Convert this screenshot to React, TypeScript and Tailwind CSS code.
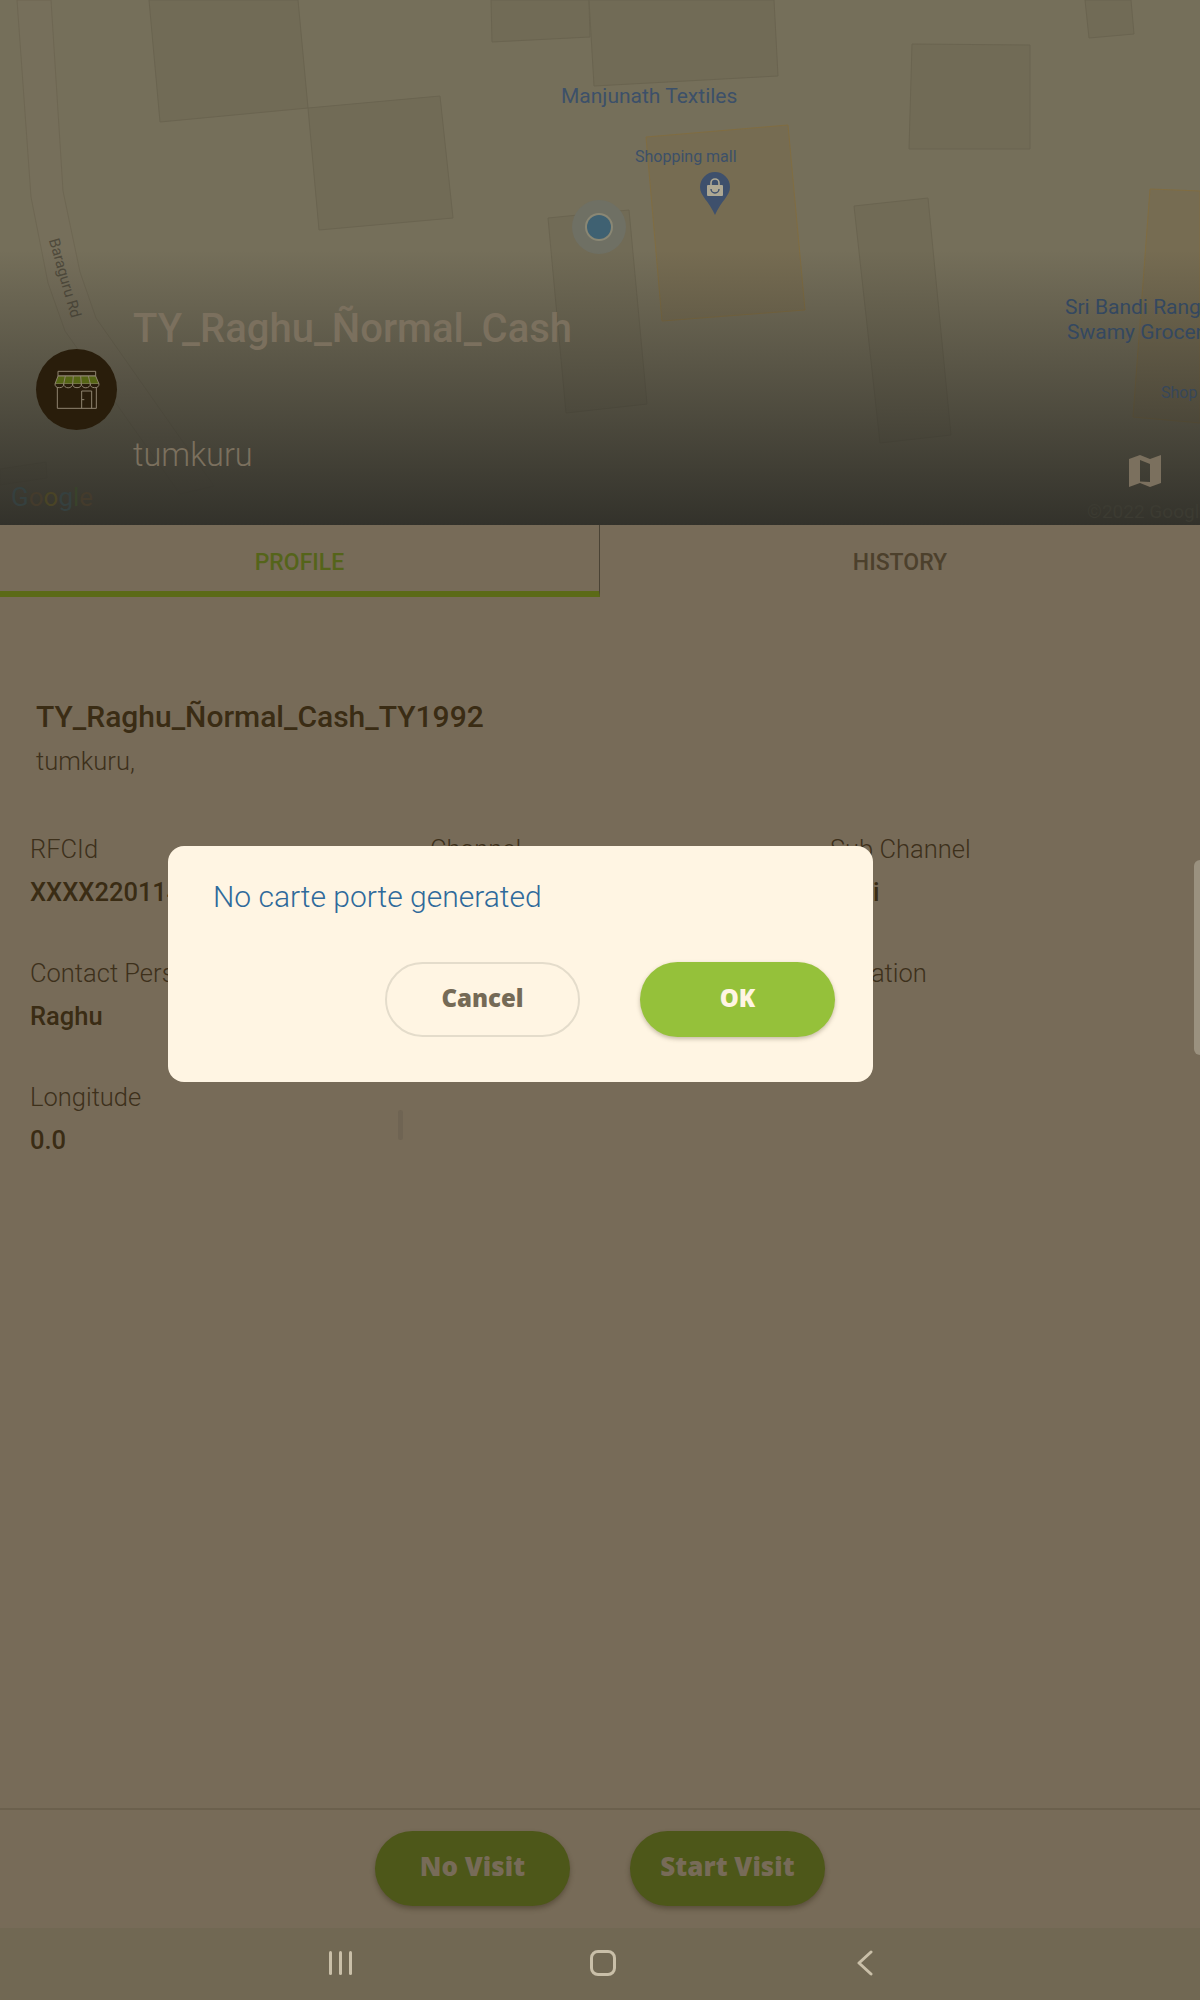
import React from "react";

const ROBOTO = "font-['Roboto','Liberation_Sans',sans-serif]";
const BTN = "font-['Noto_Sans','Liberation_Sans',sans-serif]";

function MapLayer() {
  const plain = "#716b56";
  const edge = "#6a6450";
  const blds = [
    "149,0 160,122 308,108 298,0",
    "308,108 440,96 453,218 319,230",
    "491,0 492,42 590,37 589,0",
    "589,0 594,86 778,76 774,0",
    "548,218 629,210 647,404 566,413",
    "912,44 1030,45 1030,149 909,149",
    "1085,0 1131,0 1134,34 1089,38",
    "854,206 928,198 951,435 880,443",
    "0,469 46,462 47,478 0,485",
  ];
  return (
    <svg width="1200" height="525" viewBox="0 0 1200 525" className="absolute inset-0">
      <rect width="1200" height="525" fill="#756f5a" />
      <polygon points="17,0 31,197 48,283 65,331 180,494 214,486 96,318 80,272 63,191 51,0" fill="#766f5b" stroke="#6e6753" strokeWidth="1" />
      {blds.map((p) => (
        <polygon key={p} points={p} fill={plain} stroke={edge} strokeWidth="1" />
      ))}
      <polygon points="646,137 788,125 805,310 662,321" fill="#766c52" stroke="#806d42" strokeWidth="1" />
      <polygon points="1150,189 1200,191 1200,423 1133,417" fill="#766c52" stroke="#806d42" strokeWidth="1" />
      <circle cx="599" cy="227" r="27" fill="#6f7064" />
      <circle cx="599" cy="227" r="14" fill="#8a8774" />
      <circle cx="599" cy="227" r="12" fill="#3f6172" />
      <path d="M715 172a15 15 0 0 1 15 15c0 9-9 14-15 28c-6-14-15-19-15-28a15 15 0 0 1 15-15z" fill="#3e506c" />
      <rect x="707" y="185" width="16" height="11" rx="1" fill="#aea893" />
      <path d="M711 185v-2a4 4 0 0 1 8 0v2" fill="none" stroke="#aea893" strokeWidth="1.6" />
      <path d="M711 189a4 4 0 0 0 8 0" fill="none" stroke="#3e506c" strokeWidth="1.4" />
    </svg>
  );
}

function StoreIcon() {
  return (
    <svg width="48" height="48" viewBox="157 136 144 144" fill="none" stroke="#8f8470" strokeWidth="3">
      <path d="M172 152H285V166H172Z" />
      <path d="M172 166H285L295 190H163Z" fill="#556514" />
      <path d="M163 190a13 11 0 0 0 26 0a13 11 0 0 0 27 0a13 11 0 0 0 26 0a13 11 0 0 0 27 0a13 11 0 0 0 26 0" fill="#291d0b" />
      <path d="M189 190L194 166M216 190L218 166M242 190L240 166M269 190L263 166" />
      <path d="M170 199V263H287V199" />
      <path d="M243 263V211H273V263" />
      <path d="M244 237H251" />
    </svg>
  );
}

function Header() {
  return (
    <div className="relative h-[525px] overflow-hidden bg-[#756f5a]">
      <MapLayer />
      <span className={`${ROBOTO} absolute left-[561px] top-[84px] text-[21px] leading-6 text-[#3c5069] whitespace-nowrap`}>Manjunath Textiles</span>
      <span className={`${ROBOTO} absolute left-[635px] top-[147px] text-[16px] leading-5 text-[#3c5069] whitespace-nowrap`}>Shopping mall</span>
      <span className={`${ROBOTO} absolute left-[24px] top-[268px] text-[15px] leading-5 text-[#4f4a3b] whitespace-nowrap rotate-[74deg]`}>Baraguru Rd</span>
      <div className="absolute inset-x-0 bottom-0 h-[275px] bg-gradient-to-b from-transparent to-[#33322b]" />
      <span className={`${ROBOTO} absolute left-[1065px] top-[295px] text-[21px] leading-[25px] text-[#344860] whitespace-nowrap`}>Sri Bandi Rang<br /><span className="ml-[2px]">Swamy Grocer</span></span>
      <span className={`${ROBOTO} absolute left-[1161px] top-[383px] text-[16px] leading-5 text-[#37475a] whitespace-nowrap`}>Shop</span>
      <span className={`${ROBOTO} absolute left-[11px] top-[481px] text-[26px] leading-8 text-[#3a3c35] whitespace-nowrap`}>
        <span className="text-[#35403f]">G</span><span className="text-[#443b2c]">o</span><span className="text-[#4a4426]">o</span><span className="text-[#35403f]">g</span><span className="text-[#39432b]">l</span><span className="text-[#443b2c]">e</span>
      </span>
      <span className={`${ROBOTO} absolute left-[1087px] top-[502px] text-[19px] leading-5 text-[#3c3b32] whitespace-nowrap`}>©2022 Google</span>
      <span className={`${ROBOTO} absolute left-[133px] top-[306px] text-[40px] leading-[46px] font-medium text-[#7b705e] whitespace-nowrap`}>TY_Raghu_Ñormal_Cash</span>
      <span className={`${ROBOTO} absolute left-[133px] top-[436px] text-[32.500px] leading-[38px] font-light text-[#7b705e] whitespace-nowrap`}>tumkuru</span>
      <div className="absolute left-[36px] top-[349px] flex h-[81px] w-[81px] items-center justify-center rounded-full bg-[#291d0b]">
        <StoreIcon />
      </div>
      <svg className="absolute left-[1129px] top-[455px]" width="32" height="32" viewBox="0 0 32 32">
        <path fillRule="evenodd" fill="#7b705e" d="M0 4L11 0L21 4L32 0V28L21 32L11 28L0 32ZM11 5V26.500L21 27V9Z" />
      </svg>
    </div>
  );
}

function Tabs() {
  return (
    <div className={`${ROBOTO} flex h-[72px] text-[23px] font-medium`}>
      <div className="flex h-full w-[600px] items-center justify-center border-r border-r-[#4a4335] border-b-[6px] border-b-[#5b6a17] pt-[10px] text-[#55641a]">PROFILE</div>
      <div className="flex h-full flex-1 items-center justify-center pt-[4px] text-[#4c402c]">HISTORY</div>
    </div>
  );
}

function Field({ label, value }: { label: string; value: string }) {
  return (
    <div className="h-[124px]">
      <div className="text-[25.500px] font-light leading-[34px] text-[#3d301b] whitespace-nowrap">{label}</div>
      <div className="mt-[9px] text-[25.500px] font-medium leading-[34px] text-[#3a2c14] whitespace-nowrap">{value}</div>
    </div>
  );
}

function Profile() {
  return (
    <div className={`${ROBOTO} relative flex-1 pt-[100px]`}>
      <div className="pl-[36px]">
        <div className="text-[30px] font-medium leading-10 text-[#3a2c14] whitespace-nowrap">TY_Raghu_Ñormal_Cash_TY1992</div>
        <div className="mt-[7px] text-[25.500px] font-light leading-[34px] text-[#3d301b]">tumkuru,</div>
      </div>
      <div className="mt-[54px] grid grid-cols-[400px_400px_1fr] pl-[30px]">
        <Field label="RFCId" value="XXXX220114" />
        <Field label="Channel" value="Retail" />
        <Field label="Sub Channel" value="Mini" />
        <Field label="Contact Person" value="Raghu" />
        <Field label="Phone" value="99999" />
        <Field label="Location" value="" />
        <Field label="Longitude" value="0.0" />
      </div>
      <div className="absolute left-[398px] top-[513px] h-[30px] w-[5px] rounded-sm bg-[#6f6453]" />
      <div className="absolute right-0 top-[263px] h-[195px] w-[6px] rounded-l-md bg-[#9a917f]" />
    </div>
  );
}

function Footer() {
  const btn = `${BTN} flex h-[75px] w-[195px] items-center justify-center rounded-full bg-[#4d5719] pb-[4px] text-[26px] font-black text-[#776b58] shadow-[0_3px_5px_rgba(50,40,20,0.4)]`;
  return (
    <div>
      <div className="flex h-[120px] justify-center gap-[60px] border-t-2 border-t-[#6b604d] pt-[21px]">
        <div className={btn}>No Visit</div>
        <div className={btn}>Start Visit</div>
      </div>
      <div className="relative flex h-[72px] items-center bg-[#716853]">
        <div className="absolute left-[329px] top-[23px] flex h-[24px] w-[23px] justify-between">
          <div className="w-[3px] rounded-sm bg-[#c9bfa8]" />
          <div className="w-[3px] rounded-sm bg-[#c9bfa8]" />
          <div className="w-[3px] rounded-sm bg-[#c9bfa8]" />
        </div>
        <div className="absolute left-[590px] top-[22px] h-[26px] w-[26px] rounded-[8px] border-[3px] border-[#c9bfa8]" />
        <svg className="absolute left-[857px] top-[22px]" width="16" height="26" viewBox="0 0 16 26" fill="none" stroke="#c9bfa8" strokeWidth="3" strokeLinecap="round" strokeLinejoin="round">
          <path d="M14 2L2 13L14 24" />
        </svg>
      </div>
    </div>
  );
}

function Dialog() {
  return (
    <div className="absolute left-[168px] top-[846px] flex h-[236px] w-[705px] flex-col rounded-[16px] bg-[#fff5e3] px-[45px] pt-[32px]">
      <div className={`${ROBOTO} text-[30px] font-light leading-[38px] text-[#2f6a9b] whitespace-nowrap`}>No carte porte generated</div>
      <div className={`${BTN} -mr-[7px] mt-[46px] flex justify-end gap-[60px] text-[24px] font-black`}>
        <div className="flex h-[75px] w-[195px] items-center justify-center rounded-full border-2 border-[#e4dccb] pb-[4px] text-[#756a56]">Cancel</div>
        <div className="flex h-[75px] w-[195px] items-center justify-center rounded-full bg-[#95c13a] pb-[4px] text-[#fff5e3] shadow-[0_2px_4px_rgba(90,80,50,0.35)]">OK</div>
      </div>
    </div>
  );
}

export default function App() {
  return (
    <div className="relative flex h-[2000px] w-[1200px] flex-col overflow-hidden bg-[#776b58]">
      <Header />
      <Tabs />
      <Profile />
      <Footer />
      <Dialog />
    </div>
  );
}
